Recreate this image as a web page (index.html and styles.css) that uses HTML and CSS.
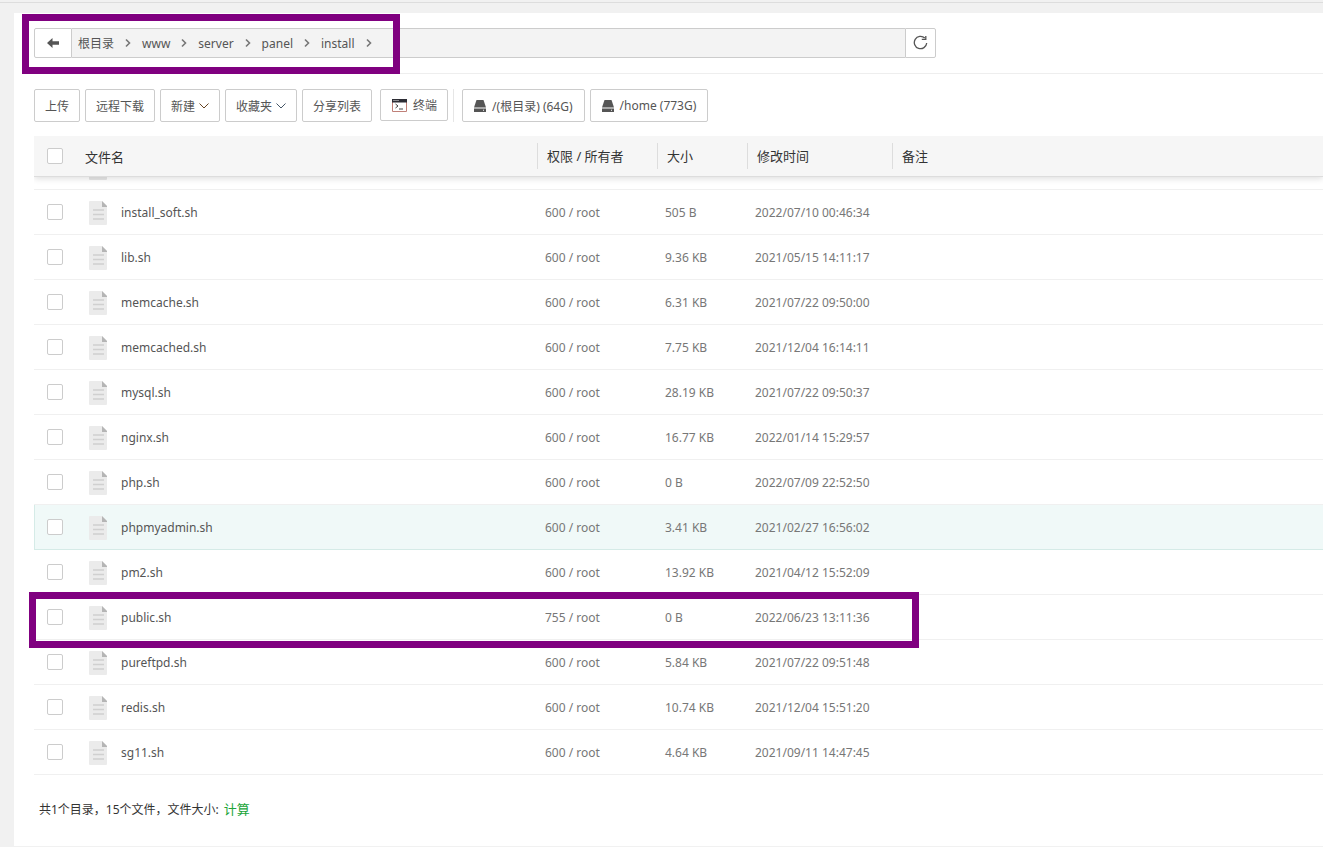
FILE: index.html
```html
<!DOCTYPE html>
<html lang="zh-CN">

<head>
    <meta charset="UTF-8">
    <meta name="viewport" content="width=device-width, initial-scale=1.0">
    <title>文件</title>
    <link rel="stylesheet" href="styles.css">
</head>

<body>
    <!-- 图标 -->
    <svg class="sprite" aria-hidden="true">
        <symbol id="icon-file" viewBox="0 0 18 24">
            <path d="M1 0h12l5 5v18a1 1 0 0 1-1 1H1a1 1 0 0 1-1-1V1a1 1 0 0 1 1-1z" fill="#ebebeb" />
            <path d="M13 0l5 5v1h-5z" fill="#b5b5b5" />
            <path d="M4 9h11M4 13.5h11M4 18h11" stroke="#d0d0d0" stroke-width="1.5" fill="none" />
        </symbol>
        <symbol id="icon-right" viewBox="0 0 6 10">
            <path d="M1 1.5L4.500 5 1 8.500" fill="none" stroke="#777" stroke-width="1.600" />
        </symbol>
        <symbol id="icon-down" viewBox="0 0 10 6">
            <path d="M.5.5L5 5 9.500.5" fill="none" stroke="currentColor" />
        </symbol>
        <symbol id="icon-disk" viewBox="0 0 12 12">
            <path d="M2.500 0h7L12 7.500H0z" fill="#555" />
            <path d="M0 8.500h12V12H0zM9 9.800v1h1v-1z" fill="#555" fill-rule="evenodd" />
        </symbol>
    </svg>

    <main class="panel">
        <nav class="path-bar">
            <button class="path-back" type="button" aria-label="返回">
                <svg width="12" height="10" viewBox="0 0 12 10">
                    <path d="M0 5l5.500-5v3.300H12v3.400H5.500V10z" fill="#555" />
                </svg>
            </button>
            <div class="path-list">
                <a href="#">根目录</a><svg class="arrow"><use href="#icon-right" /></svg>
                <a href="#">www</a><svg class="arrow"><use href="#icon-right" /></svg>
                <a href="#">server</a><svg class="arrow"><use href="#icon-right" /></svg>
                <a href="#">panel</a><svg class="arrow"><use href="#icon-right" /></svg>
                <a href="#">install</a><svg class="arrow"><use href="#icon-right" /></svg>
            </div>
            <button class="path-refresh" type="button" aria-label="刷新">
                <svg width="16" height="16" viewBox="0 0 16 16">
                    <path d="M11.800 3A6.200 6.200 0 1 0 13.700 8" fill="none" stroke="#555" stroke-width="1.300" />
                    <path d="M12.800 1v3.300H8.800" fill="none" stroke="#555" stroke-width="1.300" />
                </svg>
            </button>
            <div class="mark mark-path"></div>
        </nav>

        <div class="toolbar">
            <button class="btn" type="button">上传</button>
            <button class="btn" type="button">远程下载</button>
            <button class="btn" type="button">新建<svg class="down down-new"><use href="#icon-down" /></svg></button>
            <button class="btn" type="button">收藏夹<svg class="down"><use href="#icon-down" /></svg></button>
            <button class="btn" type="button">分享列表</button>
            <button class="btn btn-term" type="button">
                <svg width="15" height="13" viewBox="0 0 15 13">
                    <path d="M.5.5h14v12H.5z" fill="#fff" stroke="#c08078" />
                    <path d="M0 0h15v3.500H0z" fill="#2d2d35" />
                    <path d="M1.500 1.500h1M3.500 1.500h1M5.500 1.500h1" stroke="#eee" />
                    <path d="M3.500 5l2.500 2-2.500 2M7 10h4" fill="none" stroke="#444" />
                </svg>终端</button>
            <span class="divider"></span>
            <button class="btn btn-disk" type="button"><svg class="disk"><use href="#icon-disk" /></svg>/(根目录) (64G)</button>
            <button class="btn btn-disk" type="button"><svg class="disk"><use href="#icon-disk" /></svg>/home (773G)</button>
        </div>

        <table class="files">
            <colgroup>
                <col class="col-check">
                <col class="col-name">
                <col class="col-auth">
                <col class="col-size">
                <col class="col-time">
                <col>
            </colgroup>
            <thead>
                <tr>
                    <th><input type="checkbox" aria-label="全选"></th>
                    <th class="th-name">文件名</th>
                    <th><div class="th-text">权限 / 所有者</div></th>
                    <th><div class="th-text">大小</div></th>
                    <th><div class="th-text">修改时间</div></th>
                    <th><div class="th-text">备注</div></th>
                </tr>
            </thead>
            <tbody id="fileList">
                <!-- 表头下方只露出底边的一行 -->
                <tr class="row-cut">
                    <td></td>
                    <td><div class="file-foot"></div></td>
                    <td></td>
                    <td></td>
                    <td></td>
                    <td></td>
                </tr>
            </tbody>
        </table>

        <div class="footer">
            <span>共1个目录，15个文件，文件大小:</span>
            <a href="#">计算</a>
        </div>
    </main>

    <script src="files.js"></script>
</body>

</html>
```

FILE: styles.css
```css
/* 重置默认样式 */
* {
    margin: 0;
    padding: 0;
    box-sizing: border-box;
}

body {
    background: #f1f1f1;
    font-family: "Noto Sans", "Noto Sans CJK SC", sans-serif;
    font-size: 12px;
    color: #555;
    padding-top: 2px;
}

body::before {
    content: "";
    display: block;
    height: 1px;
    background: #ddd;
}

a {
    color: inherit;
    text-decoration: none;
}

button {
    font: inherit;
    color: inherit;
    background: #fff;
    border: 1px solid #ccc;
    cursor: pointer;
}

.sprite {
    position: absolute;
    width: 0;
    height: 0;
}

.panel {
    margin: 10px 0 2px 14px;
    padding: 15px 0 26px 20px;
    background: #fff;
}

/* 路径栏 */
.path-bar {
    position: relative;
    display: flex;
    padding-bottom: 15px;
    border-bottom: 1px solid #eee;
}

.path-back,
.path-refresh {
    display: flex;
    align-items: center;
    justify-content: center;
    height: 30px;
}

.path-back {
    width: 38px;
    border-radius: 2px 0 0 2px;
}

.path-refresh {
    width: 31px;
    border-radius: 0 2px 2px 0;
}

.path-list {
    display: flex;
    align-items: center;
    flex: 0 1 833px;
    height: 30px;
    padding-left: 6px;
    background: #f3f3f3;
    border-top: 1px solid #ccc;
    border-bottom: 1px solid #ccc;
}

.arrow {
    width: 6px;
    height: 10px;
    margin: 0 11px;
}

/* 标记框 */
.mark {
    position: absolute;
    border: 7px solid #800080;
    pointer-events: none;
}

.mark-path {
    top: -14px;
    left: -12px;
    width: 378px;
    height: 60px;
}

/* 工具栏 */
.toolbar {
    display: flex;
    align-items: flex-start;
    gap: 5px;
    padding: 15px 0 14px;
}

.btn {
    display: flex;
    align-items: center;
    height: 33px;
    padding: 0 10px;
    border-radius: 2px;
    white-space: nowrap;
}

.down {
    width: 10px;
    height: 6px;
    margin-left: 4px;
    color: #456;
}

.down-new {
    color: #642;
}

.btn-term {
    gap: 6px;
    height: 32px;
    margin-left: 3px;
    padding-left: 11px;
}

.divider {
    width: 1px;
    height: 33px;
    margin-right: 3px;
    background: #e6e6e6;
}

.btn-disk {
    padding: 0 11px;
}

.disk {
    width: 12px;
    height: 12px;
    margin-right: 6px;
}

/* 文件列表 */
.files {
    width: 100%;
    table-layout: fixed;
    border-collapse: separate;
    border-spacing: 0;
}

.col-check {
    width: 45px;
}

.col-name {
    width: 458px;
}

.col-auth {
    width: 120px;
}

.col-size {
    width: 90px;
}

.col-time {
    width: 145px;
}

/* 阴影只留在表头下方 */
thead {
    box-shadow: 0 2px 6px rgba(0, 0, 0, 0.12);
    clip-path: inset(0 0 -10px 0);
}

th {
    height: 41px;
    font-size: 13px;
    font-weight: normal;
    text-align: left;
    color: #333;
    background: #f6f6f6;
    border-bottom: 1px solid #ddd;
}

.th-name {
    padding-left: 6px;
}

.th-text {
    line-height: 26px;
    padding-left: 9px;
    border-left: 1px solid #ddd;
}

td {
    height: 45px;
    padding-left: 8px;
    color: #777;
    border-bottom: 1px solid #f0f0f0;
}

td:first-child {
    padding-left: 0;
}

.row-cut td {
    height: 13px;
    vertical-align: top;
}

.file-foot {
    width: 18px;
    height: 3px;
    margin-left: 2px;
    background: #e6e6e6;
    border-radius: 0 0 1px 1px;
}

input[type="checkbox"] {
    appearance: none;
    display: block;
    width: 16px;
    height: 16px;
    margin-left: 13px;
    background: #fff;
    border: 1px solid #ccc;
    border-radius: 2px;
}

.name {
    display: flex;
    align-items: center;
    gap: 14px;
    padding-left: 2px;
    color: #555;
}

.file-icon {
    width: 18px;
    height: 24px;
    margin-top: 1px;
}

.active td {
    background: #f0f9f8;
    border-bottom-color: #d5ebe7;
}

.active td:first-child {
    border-left: 1px solid #d5ebe7;
}

.active input[type="checkbox"] {
    margin-left: 12px;
}

.marked td:first-child {
    position: relative;
}

.mark-row {
    top: -3px;
    left: -5px;
    width: 890px;
    height: 56px;
}

/* 底部统计 */
.footer {
    display: flex;
    align-items: baseline;
    gap: 5px;
    padding: 24px 0 0 5px;
    line-height: 20px;
    color: #333;
}

.footer a {
    font-size: 13px;
    color: #20a53a;
}
```

FILE: files.js
```javascript
const files = [
    ['install_soft.sh', '600', '505 B', '2022/07/10 00:46:34'],
    ['lib.sh', '600', '9.36 KB', '2021/05/15 14:11:17'],
    ['memcache.sh', '600', '6.31 KB', '2021/07/22 09:50:00'],
    ['memcached.sh', '600', '7.75 KB', '2021/12/04 16:14:11'],
    ['mysql.sh', '600', '28.19 KB', '2021/07/22 09:50:37'],
    ['nginx.sh', '600', '16.77 KB', '2022/01/14 15:29:57'],
    ['php.sh', '600', '0 B', '2022/07/09 22:52:50'],
    ['phpmyadmin.sh', '600', '3.41 KB', '2021/02/27 16:56:02', 'active'],
    ['pm2.sh', '600', '13.92 KB', '2021/04/12 15:52:09'],
    ['public.sh', '755', '0 B', '2022/06/23 13:11:36', 'marked'],
    ['pureftpd.sh', '600', '5.84 KB', '2021/07/22 09:51:48'],
    ['redis.sh', '600', '10.74 KB', '2021/12/04 15:51:20'],
    ['sg11.sh', '600', '4.64 KB', '2021/09/11 14:47:45']
];

const list = document.getElementById('fileList');

files.forEach(([name, mode, size, time, state]) => {
    const mark = state === 'marked' ? '<div class="mark mark-row"></div>' : '';
    list.insertAdjacentHTML('beforeend', `
        <tr class="${state || ''}">
            <td><input type="checkbox" aria-label="${name}">${mark}</td>
            <td><div class="name"><svg class="file-icon"><use href="#icon-file" /></svg>${name}</div></td>
            <td>${mode} / root</td>
            <td>${size}</td>
            <td>${time}</td>
            <td></td>
        </tr>`);
});
```
